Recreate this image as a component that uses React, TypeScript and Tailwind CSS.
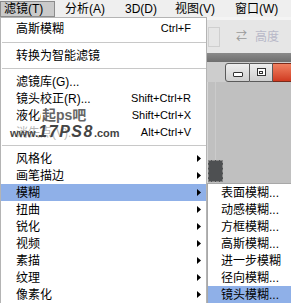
const FONT = { fontFamily: '"Liberation Sans", "Noto Sans CJK SC", sans-serif' };

type Item =
  | { kind: "item"; label: string; shortcut?: string; sub?: boolean; active?: boolean }
  | { kind: "sep"; h: string };

const items: Item[] = [
  { kind: "item", label: "高斯模糊", shortcut: "Ctrl+F" },
  { kind: "sep", h: "h-[10px]" },
  { kind: "item", label: "转换为智能滤镜" },
  { kind: "sep", h: "h-[9px]" },
  { kind: "item", label: "滤镜库(G)..." },
  { kind: "item", label: "镜头校正(R)...", shortcut: "Shift+Ctrl+R" },
  { kind: "item", label: "液化(L)...", shortcut: "Shift+Ctrl+X" },
  { kind: "item", label: "消失点(V)...", shortcut: "Alt+Ctrl+V" },
  { kind: "sep", h: "h-[9px]" },
  { kind: "item", label: "风格化", sub: true },
  { kind: "item", label: "画笔描边", sub: true },
  { kind: "item", label: "模糊", sub: true, active: true },
  { kind: "item", label: "扭曲", sub: true },
  { kind: "item", label: "锐化", sub: true },
  { kind: "item", label: "视频", sub: true },
  { kind: "item", label: "素描", sub: true },
  { kind: "item", label: "纹理", sub: true },
  { kind: "item", label: "像素化", sub: true },
];

const blurItems = ["表面模糊...", "动感模糊...", "方框模糊...", "高斯模糊...", "进一步模糊", "径向模糊...", "镜头模糊..."];

function Arrow() {
  return (
    <svg width="4" height="7" viewBox="0 0 4 7" className="absolute left-[196px] top-[5px]">
      <path d="M0 0 L4 3.5 L0 7 Z" fill="#000" />
    </svg>
  );
}

export default function App() {
  return (
    <div className="relative h-[303px] w-[291px] overflow-hidden bg-[#c0c0c0] text-[12px] text-black" style={FONT}>
      {/* menu bar */}
      <div className="flex h-[17px] items-center bg-[#efefef] leading-none">
        <div className="flex h-[16px] w-[55px] items-center border border-[#8c8c8c] bg-[#cacaca] pl-[3px]">滤镜(T)</div>
        <span className="w-[70px] pl-[10px]">分析(A)</span>
        <span className="w-[50px]">3D(D)</span>
        <span className="w-[60px]">视图(V)</span>
        <span>窗口(W)</span>
      </div>

      <div className="flex h-[286px]">
        {/* main menu */}
        <div className="relative w-[207px] border-t border-r border-l border-[#b4b4b4] bg-white pt-[2px]">
          {items.map((it, i) =>
            it.kind === "sep" ? (
              <div key={i} className={`flex items-center ${it.h}`}>
                <div className="ml-[1px] h-px w-full bg-[#c8c8c8]" />
              </div>
            ) : (
              <div
                key={i}
                className={`relative flex h-[17px] items-center pl-[15px] pr-[15px] leading-none ${it.active ? "bg-[#8fb0e8]" : ""}`}
              >
                <span className="flex-1">{it.label}</span>
                {it.shortcut && <span className="text-[11px]">{it.shortcut}</span>}
                {it.sub && <Arrow />}
              </div>
            ),
          )}
          {/* watermark */}
          <div className="absolute left-[40px] top-[88px] bg-white pl-[1px] text-[14px] font-semibold leading-[18px] text-[#666]">起ps吧</div>
          <div className="absolute left-[9px] top-[105px] flex h-[18px] items-baseline bg-white/70 font-bold leading-[18px] text-[#444]">
            <span className="text-[11px]">www.</span>
            <span className="text-[16px] italic tracking-[1.5px]">17PS8</span>
            <span className="text-[11px]">.com</span>
          </div>
        </div>

        {/* right side: workspace */}
        <div className="flex flex-1 flex-col">
          <div className="h-[3px] bg-[#f4f4f4]" />
          <div className="relative flex h-[33px] items-center bg-[#e6e6e6]">
            <div className="ml-[1px] h-[20px] w-[12px] border border-[#cfcfcf]" />
            <span className="ml-[16px] text-[11px] text-[#9a9a9a]">⇄</span>
            <span className="ml-[8px] text-[#b8b8c8]">高度</span>
          </div>
          <div className="h-[9px] bg-gradient-to-b from-[#8a8a8a] to-[#6e6e6e]" />
          <div className="flex h-[20px] items-center bg-[#cdcdcd] pl-[18px]">
            <div className="flex h-[19px] w-[25px] items-end justify-center rounded-l-[3px] border border-[#5a5a5a] bg-gradient-to-b from-[#eeeeee] to-[#cfcfcf] pb-[4px]">
              <div className="h-[5px] w-[10px] rounded-[1px] border border-[#333] bg-white" />
            </div>
            <div className="flex h-[19px] w-[23px] items-center justify-center border-y border-r border-[#5a5a5a] bg-gradient-to-b from-[#eeeeee] to-[#cfcfcf]">
              <div className="flex h-[8px] w-[9px] items-center justify-center border border-[#333] bg-white">
                <div className="h-[3px] w-[4px] border border-[#333]" />
              </div>
            </div>
            <div className="h-[19px] flex-1 border-y border-[#7a2a1a] bg-gradient-to-b from-[#f08060] to-[#d03a20]" />
          </div>
          <div className="relative flex-1 border-l border-[#d8d8d8]">
            <div className="absolute left-[7px] top-0 h-full w-px bg-[#cbcbcb]" />
            <div className="absolute left-0 top-[78px] h-[22px] w-[15px] border border-dashed border-[#888] bg-[#4e5052]" />
          </div>
        </div>
      </div>

      {/* blur submenu */}
      <div className="absolute left-[207px] top-[183px] w-[90px] border border-[#a8a8a8] bg-white">
        {blurItems.map((label, i) => (
          <div
            key={label}
            className={`flex h-[17px] items-center pl-[13px] leading-none ${i === blurItems.length - 1 ? "bg-[#8fb0e8]" : ""}`}
          >
            {label}
          </div>
        ))}
      </div>
    </div>
  );
}
